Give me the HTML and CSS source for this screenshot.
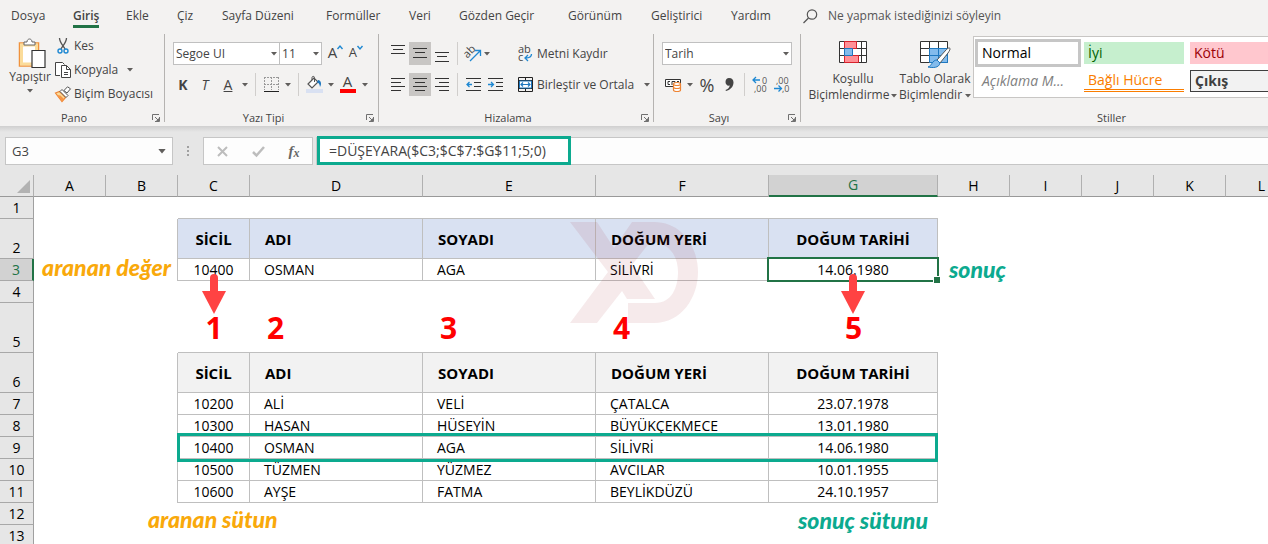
FILE: index.html
```html
<!DOCTYPE html>
<html lang="tr">
<head>
<meta charset="utf-8">
<title>DÜŞEYARA</title>
<link rel="stylesheet" href="styles.css">
</head>
<body>
<svg class="defs" width="0" height="0" aria-hidden="true">
  <symbol id="caret" viewBox="0 0 6 4"><path d="M0 0h6L3 3.5z" fill="#605e5c"/></symbol>
  <symbol id="launch" viewBox="0 0 8 8"><path d="M.5 6V.5H7M3 3l3.500 3.500M7.500 3v4.500H3" fill="none" stroke="#707070"/><path d="M7 4v3H4z" fill="#707070"/></symbol>
  <symbol id="arrow" viewBox="0 0 24 40"><path d="M12 4v20" stroke="#ff4343" stroke-width="8" stroke-linecap="round"/><path d="M0 17h24L12 40z" fill="#ff4343"/></symbol>
</svg>

<nav class="tabs">
  <a href="#">Dosya</a><a href="#" class="current">Giriş</a><a href="#">Ekle</a><a href="#">Çiz</a><a href="#">Sayfa Düzeni</a><a href="#">Formüller</a><a href="#">Veri</a><a href="#">Gözden Geçir</a><a href="#">Görünüm</a><a href="#">Geliştirici</a><a href="#">Yardım</a>
  <button class="tell"><svg width="15" height="15" viewBox="0 0 15 15" fill="none" stroke="#555" stroke-width="1.200"><circle cx="9" cy="5.500" r="4.700"/><path d="M5.500 9L.5 14"/></svg>Ne yapmak istediğinizi söyleyin</button>
</nav>

<div class="ribbon">
  <section class="group pano">
    <div class="body">
      <button class="big paste">
        <svg width="28" height="31" viewBox="0 0 28 31"><path d="M1.500 5h19v23h-19z" fill="#fff" stroke="#f0923c" stroke-width="1.500"/><path d="M3.500 7h15v19h-15z" fill="#fff" stroke="#fbdc9a" stroke-width="3"/><path d="M6 7V4h3c0-4 5-4 5 0h3v3z" fill="#fff" stroke="#666"/><path d="M14 12.500h13v17H14z" fill="#fff" stroke="#333" stroke-width="1.200"/></svg>
        <span>Yapıştır</span>
        <svg width="6" height="4"><use href="#caret"/></svg>
      </button>
      <div class="stack">
        <button><svg width="16" height="16" viewBox="0 0 16 16" fill="none"><path d="M4.500 0c0 4 3 7 5.500 11M11.500 0c0 4-3 7-5.500 11" stroke="#555" stroke-width="1.300"/><circle cx="5" cy="13" r="2" stroke="#1e88d2" stroke-width="1.400"/><circle cx="11" cy="13" r="2" stroke="#1e88d2" stroke-width="1.400"/></svg>Kes</button>
        <button><svg width="16" height="16" viewBox="0 0 16 16" fill="#fff" stroke="#444"><path d="M5 13.500H.5v-13h7l2 2"/><path d="M6.500 3.500h5l4 4v8h-9z"/><path d="M11.500 3.500v4h4M9 10.500h4M9 12.500h4" fill="none"/></svg>Kopyala<svg class="c" width="6" height="4"><use href="#caret"/></svg></button>
        <button><svg width="16" height="16" viewBox="0 0 16 16"><path d="M.5 7l4-1.500 6 6L7 15.500z" fill="#fbdc9a" stroke="#ee8434" stroke-width="1.200"/><path d="M2 9l3.500.5L9 13l-2 2.500zM5 9l4 4" fill="#f79646"/><path d="M5 5.500l2-2 6 6-2 2zM9 4.500L12.500.8l3 2L12 7z" fill="#fff" stroke="#555"/></svg>Biçim Boyacısı</button>
      </div>
    </div>
    <footer>Pano<button aria-label="Pano ayarları" class="launch"><svg width="8" height="8"><use href="#launch"/></svg></button></footer>
  </section>

  <section class="group font">
    <div class="body rows">
      <div class="line">
        <label class="combo family"><select aria-label="Yazı tipi"><option>Segoe UI</option></select><svg width="6" height="4"><use href="#caret"/></svg></label><label class="combo size"><select aria-label="Boyut"><option>11</option></select><svg width="6" height="4"><use href="#caret"/></svg></label>
        <button class="grow">A<svg width="6" height="5" viewBox="0 0 6 5"><path d="M.5 4L3 1l2.500 3" fill="none" stroke="#1e88d2" stroke-width="1.400"/></svg></button>
        <button class="grow small">A<svg width="6" height="5" viewBox="0 0 6 5"><path d="M.5 1L3 4l2.500-3" fill="none" stroke="#1e88d2" stroke-width="1.400"/></svg></button>
      </div>
      <div class="icons font-icons">
        <button class="glyph"><b>K</b></button><button class="glyph"><i>T</i></button><button class="glyph"><u>A</u></button>
        <button aria-label="Altı çizili"><svg width="6" height="4"><use href="#caret"/></svg></button><i class="sep"></i>
        <button aria-label="Kenarlıklar"><svg width="15" height="15" viewBox="0 0 15 15" fill="none"><path d="M.5 0v13M14.500 0v13M7.500 0v13M0 .5h15M0 7.500h15" stroke="#999" stroke-dasharray="2 1"/><path d="M0 14.500h15" stroke="#222"/></svg></button>
        <button aria-label="Kenarlık seç"><svg width="6" height="4"><use href="#caret"/></svg></button><i class="sep"></i>
        <button aria-label="Dolgu rengi"><svg width="17" height="17" viewBox="0 0 17 17"><path d="M8 2L2 8l4 4 6-6z" fill="#fff" stroke="#555" stroke-width="1.200"/><path d="M6 4V1.500c0-1.500 2.500-1.500 2.500 0V6" fill="none" stroke="#555"/><path d="M12 4c3 0 4 4 2 7-.5-3-1-4-3-4.500z" fill="#1e78c0"/><path d="M0 13h17v4H0z" fill="#d9e1f2"/></svg></button>
        <button aria-label="Dolgu seç"><svg width="6" height="4"><use href="#caret"/></svg></button>
        <button class="glyph red">A</button>
        <button aria-label="Renk seç"><svg width="6" height="4"><use href="#caret"/></svg></button>
      </div>
    </div>
    <footer>Yazı Tipi<button aria-label="Yazı tipi ayarları" class="launch"><svg width="8" height="8"><use href="#launch"/></svg></button></footer>
  </section>

  <section class="group align">
    <div class="body">
      <div class="rows">
        <div class="icons align-icons">
          <button aria-label="Üste hizala"><svg width="14" height="20" viewBox="0 0 14 20" stroke="#333"><path d="M0 1.500h14M2 5.500h10M0 9.500h14"/></svg></button>
          <button aria-label="Ortaya hizala" class="on"><svg width="14" height="20" viewBox="0 0 14 20" stroke="#333"><path d="M0 4.500h14M2 8.500h10M0 13.500h14"/></svg></button>
          <button aria-label="Alta hizala"><svg width="14" height="20" viewBox="0 0 14 20" stroke="#333"><path d="M0 8.500h14M2 12.500h10M0 17.500h14"/></svg></button>
          <i class="sep"></i>
          <button aria-label="Yönlendirme"><svg width="18" height="18" viewBox="0 0 18 18"><text x="0" y="10" font-size="11" fill="#444" transform="rotate(-45 6 8)">ab</text><path d="M6 16L16 6M11 5.500h5.500V11" fill="none" stroke="#1e88d2" stroke-width="1.300"/></svg></button>
          <button aria-label="Yön seç" class="left"><svg width="6" height="4"><use href="#caret"/></svg></button>
        </div>
        <div class="icons align-icons">
          <button aria-label="Sola hizala"><svg width="14" height="14" viewBox="0 0 14 14" stroke="#333"><path d="M0 .5h14M0 4.500h10M0 8.500h14M0 12.500h10"/></svg></button>
          <button aria-label="Ortala" class="on"><svg width="14" height="14" viewBox="0 0 14 14" stroke="#333"><path d="M0 .5h14M2 4.500h10M0 8.500h14M2 12.500h10"/></svg></button>
          <button aria-label="Sağa hizala"><svg width="14" height="14" viewBox="0 0 14 14" stroke="#333"><path d="M0 .5h14M4 4.500h10M0 8.500h14M4 12.500h10"/></svg></button>
          <i class="sep"></i>
          <button aria-label="Girintiyi azalt"><svg width="15" height="14" viewBox="0 0 15 14" fill="none"><path d="M0 .5h15M8 4.500h7M8 8.500h7M0 12.500h15" stroke="#333"/><path d="M6 6.500H1M3.500 4L1 6.500 3.500 9" stroke="#1e88d2" stroke-width="1.300"/></svg></button>
          <button aria-label="Girintiyi artır"><svg width="15" height="14" viewBox="0 0 15 14" fill="none"><path d="M0 .5h15M8 4.500h7M8 8.500h7M0 12.500h15" stroke="#333"/><path d="M0 6.500h5M3 4l2.500 2.500L3 9" stroke="#1e88d2" stroke-width="1.300"/></svg></button>
        </div>
      </div>
      <i class="divider"></i>
      <div class="rows wide">
        <button><svg width="15" height="17" viewBox="0 0 15 17"><text x="0" y="8" font-size="11" fill="#444">ab<tspan x="0" y="16">c</tspan></text><path d="M13.500 9c0 3-2 4-6 4M10 10l-3 3 3 3" fill="none" stroke="#1e88d2" stroke-width="1.300"/></svg>Metni Kaydır</button>
        <button><svg width="15" height="15" viewBox="0 0 15 15" fill="none"><path d="M.5.5h14v14H.5zM.5 3.500h14M.5 11.500h14M7.500.5v3M7.500 11.500v3" stroke="#222"/><path d="M1.500 4h12v7h-12z" fill="#fff" stroke="#1e78c0"/><path d="M3 7.500h9M5 5.500l-2 2 2 2M10 5.500l2 2-2 2" stroke="#1e78c0" stroke-width="1.200"/></svg>Birleştir ve Ortala<svg class="c" width="6" height="4"><use href="#caret"/></svg></button>
      </div>
    </div>
    <footer>Hizalama<button aria-label="Hizalama ayarları" class="launch"><svg width="8" height="8"><use href="#launch"/></svg></button></footer>
  </section>

  <section class="group number">
    <div class="body rows">
      <div class="line"><label class="combo format"><select aria-label="Sayı biçimi"><option>Tarih</option></select><svg width="6" height="4"><use href="#caret"/></svg></label></div>
      <div class="icons number-icons">
        <button aria-label="Para birimi"><svg width="17" height="14" viewBox="0 0 17 14"><path d="M.5 1.500h15v7H.5z" fill="#fff" stroke="#333"/><path d="M5 3.500H3v3h2M7 7V3.500h3V7M12 3.500h2" fill="none" stroke="#333"/><path d="M8.500 6c0-2 7-2 7 0v6c0 2-7 2-7 0z" fill="#fff" stroke="#ee8434" stroke-width="1.200"/><path d="M8.500 6c0 2 7 2 7 0M8.500 9c0 2 7 2 7 0" fill="none" stroke="#ee8434" stroke-width="1.200"/></svg></button>
        <button aria-label="Para seç"><svg width="6" height="4"><use href="#caret"/></svg></button>
        <button class="percent">%</button>
        <button aria-label="Binlik ayırıcı"><svg width="9" height="13" viewBox="0 0 9 13"><path d="M4 0c3 0 4.500 2 4.500 4.500C8.500 9 5 12 1 13l-.5-1C3 11 4.500 9.500 4.700 7.500 2.500 8.200.5 6.500.5 4 .5 1.500 2 0 4 0z" fill="#444"/></svg></button>
        <i class="sep"></i>
        <button aria-label="Ondalık artır"><svg width="16" height="17" viewBox="0 0 16 17"><text x="10" y="8" font-size="9" fill="#555">0<tspan x="2" y="16">,00</tspan></text><path d="M8 4H1M4 1L1 4l3 3" fill="none" stroke="#1e88d2" stroke-width="1.300"/></svg></button>
        <button aria-label="Ondalık azalt"><svg width="16" height="17" viewBox="0 0 16 17"><text x="2" y="8" font-size="9" fill="#555">,00<tspan x="8" y="16">,0</tspan></text><path d="M0 12.500h7M4.500 9.500l3 3-3 3" fill="none" stroke="#1e88d2" stroke-width="1.300"/></svg></button>
      </div>
    </div>
    <footer>Sayı<button aria-label="Sayı ayarları" class="launch"><svg width="8" height="8"><use href="#launch"/></svg></button></footer>
  </section>

  <section class="group styles">
    <div class="body">
      <button class="big cond">
        <svg width="28" height="22" viewBox="0 0 28 22"><path d="M.5.5h27v21H.5zM.5 7.500h27M.5 14.500h27M5.500.5v21M22.500.5v21" fill="#fff" stroke="#333"/><path d="M5.500.5h12v7h-12zM5.500 14.500h14v7h-14z" fill="#ff9096" stroke="#d8222c"/><path d="M5.500 7.500h8v7h-8z" fill="#83bbec" stroke="#1e78c0"/><path d="M14 8h8v6h-8z" fill="#fff"/></svg>
        <span>Koşullu</span><span>Biçimlendirme<svg width="6" height="4"><use href="#caret"/></svg></span>
      </button>
      <button class="big table-style">
        <svg width="31" height="27" viewBox="0 0 31 27"><path d="M.5.500h27v21H.5zM.5 7.500h27M.5 14.500h27M9.500.5v21M18.500.5v21" fill="#fff" stroke="#333"/><path d="M9.500 7.500h18v14h-18zM18.500 7.500v14M9.500 14.500h18" fill="#83bbec" stroke="#1e78c0"/><path d="M29 7c2 0 1 2-1 5l-8 10-3-3 9-10c1-1 2-2 3-2z" fill="#fff" stroke="#555"/><path d="M17 19l3 3c-1 5-7 5-12 4 4-1 4-7 9-7z" fill="#83bbec" stroke="#1e78c0"/></svg>
        <span>Tablo Olarak</span><span>Biçimlendir<svg width="6" height="4"><use href="#caret"/></svg></span>
      </button>
      <div class="gallery">
        <button class="s-normal">Normal</button><button class="s-good">İyi</button><button class="s-bad">Kötü</button>
        <button class="s-note">Açıklama M...</button><button class="s-link">Bağlı Hücre</button><button class="s-out">Çıkış</button>
      </div>
    </div>
    <footer>Stiller</footer>
  </section>
</div>

<div class="formula-bar">
  <div class="name-box"><input aria-label="Ad kutusu" value="G3"><svg width="8" height="5" viewBox="0 0 6 4"><use href="#caret"/></svg></div>
  <svg class="dots" width="3" height="13" viewBox="0 0 3 13" fill="#a0a0a0"><path d="M0 1h2v2H0zM0 5h2v2H0zM0 9h2v2H0z"/></svg>
  <div class="fx">
    <button aria-label="İptal"><svg width="11" height="11" viewBox="0 0 11 11" stroke="#bdbdbd" stroke-width="2"><path d="M1 1l9 9M10 1l-9 9"/></svg></button>
    <button aria-label="Gir"><svg width="13" height="11" viewBox="0 0 13 11" fill="none" stroke="#bdbdbd" stroke-width="2.500"><path d="M1 6l3.500 3.500L12 1"/></svg></button>
    <button class="fn">f<small>x</small></button>
  </div>
  <div class="formula"><input aria-label="Formül" value="=DÜŞEYARA($C3;$C$7:$G$11;5;0)"></div>
</div>

<main class="sheet">
<table>
  <colgroup><col class="w-row"><col class="w-s"><col class="w-s"><col class="w-s"><col class="w-l"><col class="w-l"><col class="w-l"><col class="w-m"><col class="w-s"><col class="w-s"><col class="w-s"><col class="w-s"><col class="w-s"></colgroup>
  <thead><tr><th class="corner"><svg width="13" height="13" viewBox="0 0 13 13"><path d="M13 0v13H0z" fill="#b2b2b2"/></svg></th><th>A</th><th>B</th><th>C</th><th>D</th><th>E</th><th>F</th><th class="sel">G</th><th>H</th><th>I</th><th>J</th><th>K</th><th>L</th></tr></thead>
  <tbody>
  <tr class="edge"><th>1</th><td></td><td></td><td></td><td></td><td></td><td></td><td></td></tr>
  <tr class="data head blue"><th>2</th><td></td><td></td><td>SİCİL</td><td>ADI</td><td>SOYADI</td><td class="mark">DOĞUM YERİ<svg class="logo" width="128" height="101" viewBox="0 0 128 101" fill="#a01822"><path d="M0 0H27L44 26 62 0H84C112 0 128 25 128 50S112 101 84 101H58V81H85C102 81 108 65 108 50S100 20 80 20L62 43 85 77H57L52 69 27 101H0L38 50z"/></svg></td><td>DOĞUM TARİHİ</td></tr>
  <tr class="data"><th class="sel">3</th><td></td><td class="anchor"><span class="note orange value">aranan değer</span></td><td class="anchor">10400<svg class="arrow" width="24" height="40"><use href="#arrow"/></svg></td><td>OSMAN</td><td>AGA</td><td>SİLİVRİ</td><td class="anchor active">14.06.1980<svg class="arrow" width="24" height="40"><use href="#arrow"/></svg></td><td class="anchor"><span class="note green result">sonuç</span></td></tr>
  <tr><th>4</th></tr>
  <tr class="edge count"><th>5</th><td></td><td></td><td>1</td><td>2</td><td>3</td><td>4</td><td>5</td></tr>
  <tr class="data head gray"><th>6</th><td></td><td></td><td>SİCİL</td><td>ADI</td><td>SOYADI</td><td>DOĞUM YERİ</td><td>DOĞUM TARİHİ</td></tr>
  <tr class="data"><th>7</th><td></td><td></td><td>10200</td><td>ALİ</td><td>VELİ</td><td>ÇATALCA</td><td>23.07.1978</td></tr>
  <tr class="data"><th>8</th><td></td><td></td><td>10300</td><td>HASAN</td><td>HÜSEYİN</td><td>BÜYÜKÇEKMECE</td><td>13.01.1980</td></tr>
  <tr class="data"><th>9</th><td></td><td></td><td class="anchor">10400<span class="frame"></span></td><td>OSMAN</td><td>AGA</td><td>SİLİVRİ</td><td>14.06.1980</td></tr>
  <tr class="data"><th>10</th><td></td><td></td><td>10500</td><td>TÜZMEN</td><td>YÜZMEZ</td><td>AVCILAR</td><td>10.01.1955</td></tr>
  <tr class="data"><th>11</th><td></td><td></td><td>10600</td><td>AYŞE</td><td>FATMA</td><td>BEYLİKDÜZÜ</td><td>24.10.1957</td></tr>
  <tr><th>12</th><td></td><td class="anchor"><span class="note orange column">aranan sütun</span></td><td></td><td></td><td></td><td></td><td class="anchor"><span class="note green column-result">sonuç sütunu</span></td></tr>
  <tr><th>13</th></tr>
  </tbody>
</table>
</main>
</body>
</html>
```
FILE: styles.css
```css
* { box-sizing: border-box; }
body {
  margin: 0;
  height: 100vh;
  overflow: hidden;
  background: #fff;
  color: #444;
  font: 12px/16px "Open Sans", "Noto Sans", sans-serif;
}
button, input, select {
  margin: 0;
  padding: 0;
  border: 0;
  background: none;
  color: inherit;
  font: inherit;
}
button { white-space: nowrap; }
svg { flex: none; overflow: visible; }
.defs { position: absolute; }

/* Tabs */
.tabs {
  display: grid;
  grid-template-columns: 62px 53px 51px 45px 104px 83px 50px 109px 83px 80px 72px 1fr;
  justify-items: start;
  height: 32px;
  padding: 6px 0 0 11px;
  background: #f3f2f1;
  white-space: nowrap;
}
.tabs a { height: 22px; line-height: 20px; color: #444; text-decoration: none; }
.tabs .current { font-weight: 600; border-bottom: 3px solid #217346; }
.tell { display: flex; align-items: center; gap: 10px; height: 20px; color: #555; }

/* Ribbon */
.ribbon { display: flex; height: 94px; padding: 2px 0 4px; background: #f3f2f1; overflow: hidden; }
.group { display: flex; flex: none; flex-direction: column; border-right: 1px solid #b5b3b1; }
.body { display: flex; height: 76px; }
.group footer { position: relative; height: 12px; line-height: 16px; text-align: center; font-size: 11px; }
.launch { position: absolute; right: 4px; top: 4px; width: 8px; height: 8px; }
.launch svg { display: block; }
.pano { width: 165px; }
.font { width: 214px; }
.align { width: 275px; }
.number { width: 147px; }
.styles { width: 622px; }
.pano footer, .font footer, .align footer, .number footer { padding-right: 16px; }

.big { display: flex; flex-direction: column; align-items: center; line-height: 16px; }
.big span svg { margin-left: 3px; vertical-align: middle; }
.paste { width: 44px; margin: 4px 3px 0 8px; }
.paste > svg:first-child { margin-left: 4px; }
.paste > svg:last-child { margin-top: 4px; }
.stack { display: flex; flex-direction: column; }
.stack button { display: flex; align-items: center; gap: 3px; height: 24px; }
.c { margin-left: 6px; }

.rows { display: flex; flex-direction: column; gap: 8px; padding: 8px 8px 0; }
.line { display: flex; height: 23px; }
.combo { display: flex; align-items: center; height: 23px; padding: 0 2px; background: #fff; border: 1px solid #c0c0c0; }
.combo select { flex: 1; min-width: 0; appearance: none; }
.family { width: 111px; }
.size { width: 43px; border-left: 0; }
.format { width: 131px; }
.grow { display: flex; align-items: flex-start; width: 22px; margin-left: 6px; font-size: 15px; line-height: 20px; }
.grow svg { margin-top: 3px; }
.grow + .grow { margin-left: 0; }
.small { font-size: 13px; }
.icons { display: grid; height: 23px; }
.icons button { display: flex; align-items: center; justify-content: center; height: 23px; }
.icons .left { justify-content: flex-start; }
.icons .on { background: #c8c6c4; }
.font-icons { grid-template-columns: 20px 24px 22px 11px 10px 22px 11px 10px 23px 9px 25px 9px; }
.align-icons { grid-template-columns: 22px 22px 22px 9px 22px 22px; }
.number-icons { grid-template-columns: 22px 11px 24px 20px 10px 22px 22px; }
.sep { justify-self: center; width: 1px; background: #d0cecc; }
.icons .glyph { font-size: 14px; }
.icons .red { justify-self: center; height: 20px; width: 16px; border-bottom: 4px solid #f00; font-size: 15px; }
.icons .percent { font-size: 18px; }
.align .body > .rows:first-child { padding-right: 4px; }
.divider { width: 1px; height: 58px; margin-top: 6px; background: #d0cecc; }
.rows.wide { padding-left: 8px; }
.wide button { display: flex; align-items: center; gap: 4px; height: 23px; }

.cond { width: 92px; margin: 7px 0 0 6px; }
.cond > svg { margin-bottom: 8px; }
.table-style { width: 72px; margin-top: 7px; }
.table-style > svg { margin-bottom: 3px; }
.cond span svg { margin-left: 2px; }
.gallery {
  display: grid;
  grid-template-columns: 106px 106px 106px;
  grid-template-rows: 28px 28px;
  width: 420px;
  height: 62px;
  margin: 2px 0 0 2px;
  padding: 2px 0 0 1px;
  background: #fff;
  border: 1px solid #c8c6c4;
}
.gallery button { margin: 3px; height: 22px; padding: 0 4px; text-align: left; font-size: 14px; line-height: 20px; }
.gallery .s-normal { height: 28px; margin: 0; padding: 0 4px; border: 3px solid #c6c6c6; color: #000; }
.gallery .s-good { background: #c6efce; color: #006100; }
.gallery .s-bad { background: #ffc7ce; color: #9c0006; }
.gallery .s-note { color: #7f7f7f; font-style: italic; }
.gallery .s-link { color: #fa7d00; border-bottom: 3px double #fa7d00; }
.gallery .s-out { background: #f2f2f2; color: #3f3f3f; border: 1px solid #3f3f3f; font-weight: 700; }

/* Formula bar */
.formula-bar {
  display: flex;
  height: 49px;
  padding: 11px 0 10px 5px;
  background: linear-gradient(#cfcfcf, #e6e6e6 6px);
}
.name-box { display: flex; align-items: center; width: 168px; padding: 0 6px; border: 1px solid #c6c6c6; background: #fdfdfd; font-size: 13px; }
.name-box input { flex: 1; min-width: 0; }
.dots { align-self: center; margin: 0 13px 0 14px; }
.fx { display: grid; grid-template-columns: 36px 36px 36px; width: 110px; border: 1px solid #c6c6c6; background: #fdfdfd; }
.fx button { display: flex; align-items: center; justify-content: center; }
.fx .fn { font: italic bold 15px "Liberation Serif", serif; color: #666; }
.fn small { font-size: 12px; margin-top: 4px; }
.formula { flex: 1; margin-left: 3px; border: 1px solid #c6c6c6; border-right: 0; background: #fdfdfd; }
.formula input { display: block; width: 254px; height: 29px; margin-top: -2px; padding: 0 9px; border: 3px solid #0caa8f; background: #fff; font-size: 14px; }

/* Sheet */
.sheet { overflow: hidden; }
table { width: 1298px; table-layout: fixed; border-spacing: 0; color: #000; font-size: 14px; line-height: 20px; }
.w-row { width: 34px; }
.w-s { width: 72px; }
.w-m { width: 169px; }
.w-l { width: 173px; }
th, td { height: 22px; padding: 0; text-align: center; white-space: nowrap; }
th {
  background: #e6e6e6;
  border-right: 1px solid #a0a0a0;
  border-bottom: 1px solid #a8a8a8;
  font-weight: 400;
  vertical-align: bottom;
  line-height: 21px;
}
thead th { border-bottom-color: #999; border-right-color: #b0b0b0; }
.corner { text-align: right; padding-right: 3px; }
.corner svg { margin-bottom: 3px; display: inline-block; vertical-align: bottom; }
th.sel { background: #d2d2d2; color: #217346; }
thead .sel { border-bottom: 2px solid #217346; line-height: 20px; }
tbody .sel { border-right: 2px solid #217346; }
.edge td:nth-child(n+4), .data td:nth-child(n+4):nth-child(-n+8) { border-bottom: 1px solid #bfbfbf; }
.data td:nth-child(n+3):nth-child(-n+8) { border-right: 1px solid #bfbfbf; }
td:nth-child(n+5):nth-child(-n+7) { text-align: left; padding-left: 14px; }
.head td { height: 40px; font-size: 15px; font-weight: 700; }
.head td:nth-child(n+5):nth-child(-n+7) { padding-left: 15px; }
.blue td:nth-child(n+4) { background: #d9e1f2; }
.gray td:nth-child(n+4) { background: #f2f2f2; }
.count td { height: 50px; color: #f00; font-size: 30px; font-weight: 700; line-height: 48px; }
.count td:nth-child(n+5):nth-child(-n+7) { padding-left: 17px; }

/* Drawings over the cells */
.anchor, .mark { position: relative; }
.logo { position: absolute; left: -26px; top: 3px; z-index: 1; opacity: .09; }
.arrow { position: absolute; left: calc(50% - 12px); top: 15px; z-index: 3; }
.active::before { content: ""; position: absolute; inset: -2px; border: 2px solid #217346; z-index: 2; }
.active::after { content: ""; position: absolute; right: -3px; bottom: -3px; width: 6px; height: 6px; background: #217346; border: solid #fff; border-width: 1px 0 0 1px; z-index: 3; }
.frame { position: absolute; left: -1px; top: -4px; width: 761px; height: 29px; border: 3px solid #0caa8f; z-index: 2; }
.note { position: absolute; font: italic 900 23px/24px Lato, sans-serif; z-index: 2; }
.orange { color: #f9a90b; }
.green { color: #0caa8f; }
.value { right: 6px; top: -4px; }
.result { left: 11px; top: -2px; }
.column { left: 42px; top: 4px; }
.column-result { left: 29px; top: 5px; }
```
